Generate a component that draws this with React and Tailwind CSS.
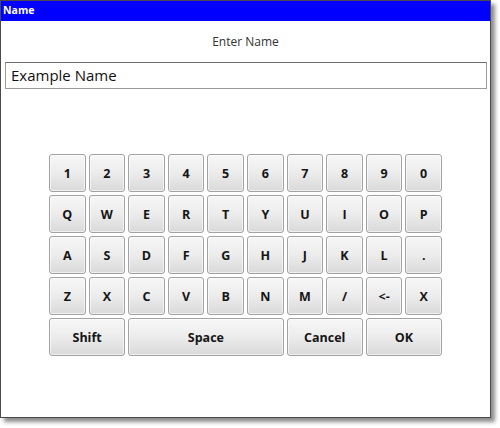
const ROWS = [
  ["1", "2", "3", "4", "5", "6", "7", "8", "9", "0"],
  ["Q", "W", "E", "R", "T", "Y", "U", "I", "O", "P"],
  ["A", "S", "D", "F", "G", "H", "J", "K", "L", "."],
  ["Z", "X", "C", "V", "B", "N", "M", "/", "<-", "X"],
];

function Key({ label, wide }) {
  return (
    <button
      className={`${wide || ""} flex h-[38px] items-center justify-center rounded-[3px] border border-[#a2a2a2] bg-linear-to-b from-[#f7f7f7] via-[#ececec] to-[#d9d9d9] pt-[3px] text-[12.5px] font-bold text-[#151515] shadow-[inset_0_0_0_1px_rgba(255,255,255,0.6)]`}
    >
      {label}
    </button>
  );
}

export default function App() {
  return (
    <div className="relative h-[428px] w-[500px] bg-white" style={{ fontFamily: '"Open Sans", "Noto Sans", sans-serif' }}>
      <div className="flex h-[418px] w-[491px] flex-col border border-[#4a4a4a] bg-white shadow-[4px_4px_4px_rgba(0,0,0,0.45)]">
        <div className="flex h-[20px] items-center bg-[#0000ff] px-[2px] text-[10.5px] font-bold text-white">Name</div>

        <div className="pt-[12px] text-center text-[12px] leading-[17px] text-[#333]">Enter Name</div>

        <div className="mt-[12px] ml-[4px] mr-[3px] flex h-[27px] items-center border border-[#9a9a9a] border-t-[#6e6e6e] bg-white px-[5px] text-[15px] text-[#111]">
          Example Name
        </div>

        <div className="mx-auto mt-[65px] grid w-[393px] grid-cols-10 gap-x-[3px] gap-y-[3px]">
          {ROWS.map((row, i) => row.map((k, j) => <Key key={i + "-" + j} label={k} />))}
          <Key label="Shift" wide="col-span-2" />
          <Key label="Space" wide="col-span-4" />
          <Key label="Cancel" wide="col-span-2" />
          <Key label="OK" wide="col-span-2" />
        </div>
      </div>
    </div>
  );
}
